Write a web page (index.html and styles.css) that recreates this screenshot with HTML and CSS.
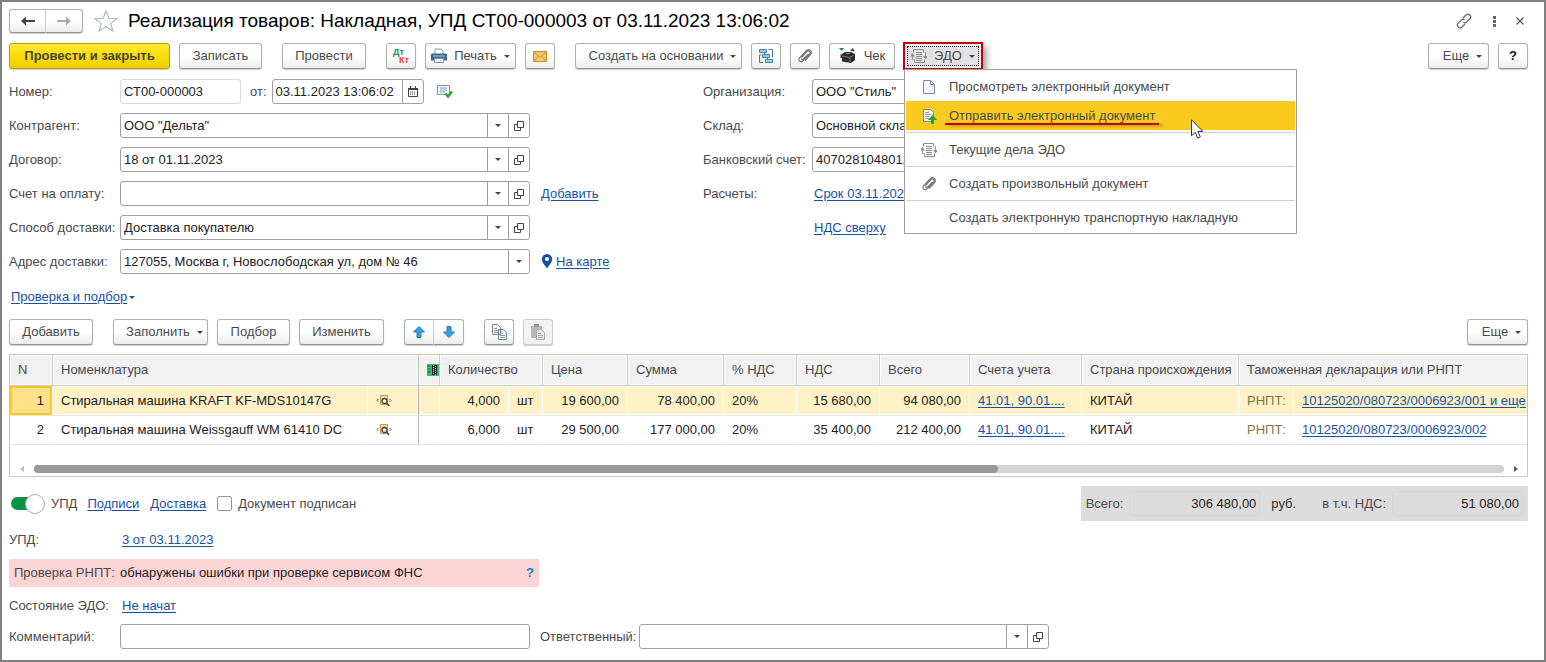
FILE: index.html
```html
<!DOCTYPE html>
<html lang="ru">
<head>
<meta charset="utf-8">
<title>Реализация товаров: Накладная, УПД СТ00-000003</title>
<link rel="stylesheet" href="styles.css">
</head>
<body>
<svg class="defs" aria-hidden="true">
  <symbol id="i-open" viewBox="0 0 10 10"><path d="M3.500.5h6v6h-6z M3.500 3.500h-3v6h6v-3" fill="none" stroke="#444"/></symbol>
  <symbol id="i-clip" viewBox="0 0 16 16"><path d="M4.500 9.500l5.500-5.800c1.800-1.700 4 .2 2.500 2.200l-6.500 7c-2.500 2.300-5.500-.6-3.200-3.200l6.500-7c2.700-2.700 6.700.6 4.200 3.800l-5.500 6M5 10.300c-.6 1.400.8 1.800 1.600.8l4.700-5" fill="none" stroke="#777" stroke-width="1.200"/></symbol>
  <symbol id="i-edo" viewBox="0 0 16 16"><path d="M2.500 4.500v-3h10v3M3.500 11.500v3h10v-3M5 4.500h6M5 6.500h6M5 8.500h6M5 10.500h6M5 12.500h6M13.500 4.500h1v4M2.500 11.500h-1v-4" fill="none" stroke="#8c8c8c"/><path d="M-1 8.500l2.500-3.500L4 8.500zM12 8l2.500 3.500L17 8z" fill="#8c8c8c"/></symbol>
  <symbol id="i-find" viewBox="0 0 16 14"><path d="M4.500 1.500h7v9h-7z" fill="#fbd79c" stroke="#c89b5a"/><circle cx="8.500" cy="7" r="2.500" fill="#fff3da" stroke="#444" stroke-width="1.300"/><path d="M10.500 9l2.500 3" stroke="#444" stroke-width="1.600"/><path d="M2.500 5L1 6.500 2.500 8M13.500 5L15 6.500 13.500 8" fill="none" stroke="#555"/></symbol>
</svg>
<main class="window">
  <header class="titlebar">
    <div class="pair nav">
      <button class="btn" aria-label="Назад"><svg width="14" height="10" viewBox="0 0 14 10"><path d="M0 5l5-4.500V4h9v2H5v3.500z" fill="#444"/></svg></button>
      <button class="btn" aria-label="Вперед"><svg width="14" height="10" viewBox="0 0 14 10"><path d="M14 5L9 .5V4H0v2h9v3.500z" fill="#aaa"/></svg></button>
    </div>
    <svg class="star" width="24" height="22" viewBox="0 0 24 22"><path d="M12 1l3 7.500 8 .2-6.400 4.900L19 21l-7-4.500L5 21l2.400-7.400L1 8.700l8-.2z" fill="none" stroke="#b3bac2" stroke-width="1.200"/></svg>
    <h1>Реализация товаров: Накладная, УПД СТ00-000003 от 03.11.2023 13:06:02</h1>
    <div class="window-tools">
      <button class="plain" aria-label="Ссылка"><svg width="16" height="16" viewBox="0 0 16 16" fill="none" stroke="#666" stroke-width="1.300"><path d="M7 5l3-3c2.500-2.300 6 1.200 4 3.600l-3.500 3.500c-1 .9-2.300.8-3.200.1M9 11l-3 3c-2.500 2.300-6-1.200-4-3.600l3.500-3.500c1-.9 2.300-.8 3.200-.1"/></svg></button>
      <button class="plain" aria-label="Меню"><svg width="3" height="11" fill="#666"><path d="M0 0h3v3H0zM0 4h3v3H0zM0 8h3v3H0z"/></svg></button>
      <button class="plain" aria-label="Закрыть"><svg width="8" height="8" stroke="#555" stroke-width="1.200"><path d="M.5.5l7 7M7.500.5l-7 7"/></svg></button>
    </div>
  </header>

  <div class="toolbar">
    <button class="btn primary">Провести и закрыть</button>
    <button class="btn w-save">Записать</button>
    <button class="btn w-post group">Провести</button>
    <button class="btn icon group" aria-label="Дт Кт"><span class="dtkt"><span class="dt">Дт</span><span class="kt">Кт</span></span></button>
    <button class="btn w-print"><svg width="16" height="16" viewBox="0 0 16 16"><path d="M4 1h6l2 2v4H4z" fill="#fff" stroke="#8296aa"/><path d="M1.500 5.500h13c.8 0 1.500.5 1.500 1.300V12.500H0V6.800c0-.8.7-1.300 1.500-1.300z" fill="#3a6a92"/><path d="M2 8h12" stroke="#a8c6de"/><path d="M3.500 10.500h9v4h-9z" fill="#eef3f7" stroke="#8296aa"/></svg>Печать<i class="caret"></i></button>
    <button class="btn icon" aria-label="Письмо"><svg width="14" height="11" viewBox="0 0 14 11"><path d="M.5.5h13v10H.5z" fill="#f8c968" stroke="#c98b2b"/><path d="M1 1l6 5.500L13 1M1 10l4.500-5M13 10L8.500 5" fill="none" stroke="#c98b2b"/></svg></button>
    <button class="btn w-create group">Создать на основании<i class="caret"></i></button>
    <button class="btn icon" aria-label="Структура"><svg width="16" height="16" viewBox="0 0 16 16"><path d="M1.500 1.500h7v3h-7zM4.500 6.500h7v3h-7zM7.500 11.500h7v3h-7z" fill="#a9cbe3" stroke="#3d7ba8"/><path d="M10.500 1.500h4v8M3.500 7H1.500v7.500H5M6.500 4.500v2M9.500 9.500v2" fill="none" stroke="#3d7ba8"/></svg></button>
    <button class="btn icon" aria-label="Файлы"><svg width="16" height="16"><use href="#i-clip"/></svg></button>
    <button class="btn w-check"><svg width="18" height="16" viewBox="0 0 18 16"><path d="M1.500 7l4.500-3h6l4 2v6l-4 3-9-1.500V10H1.500z" fill="#2b2b2b"/><path d="M3 8l8 1.500L15 7M11 10v4" stroke="#777" fill="none"/><path d="M7 5.500h4" stroke="#999"/><path d="M0 0h5L2.500 3z" fill="#159447"/><path d="M11 3l2.500-3L16 3z" fill="#2f45b5"/></svg>Чек</button>
    <div class="edo">
      <button class="btn edo-btn" aria-expanded="true"><svg class="wide" width="16" height="16"><use href="#i-edo"/></svg>ЭДО<i class="caret"></i></button>
      <div class="menu" role="menu">
        <div class="menu-group">
          <button role="menuitem"><svg width="16" height="16" viewBox="0 0 16 16"><path d="M2.500 1.500h7l4 4v9h-11z" fill="#f3f7fa" stroke="#7a8ea3"/><path d="M9.500 1.500v4h4" fill="none" stroke="#7a8ea3"/></svg>Просмотреть электронный документ</button>
          <button role="menuitem" class="active"><svg width="16" height="16" viewBox="0 0 16 16"><path d="M2.500 1.500h7l3 3v9h-10z" fill="#f3f7fa" stroke="#7a8ea3"/><path d="M4 4.500h4M4 6.500h6M4 8.500h5M4 10.500h4" stroke="#8fa3b5"/><path d="M11.500 7l4.500 5h-3v4h-3v-4H7z" fill="#14a52c"/></svg><span class="marked">Отправить электронный документ</span></button>
        </div>
        <div class="menu-group"><button role="menuitem"><svg class="wide" width="16" height="16"><use href="#i-edo"/></svg>Текущие дела ЭДО</button></div>
        <div class="menu-group"><button role="menuitem"><svg width="16" height="16"><use href="#i-clip"/></svg>Создать произвольный документ</button></div>
        <div class="menu-group"><button role="menuitem"><svg width="16" height="16"></svg>Создать электронную транспортную накладную</button></div>
        <svg class="cursor" width="13" height="20" viewBox="0 0 13 20"><path d="M.5.8v16l3.700-3.400 2.500 5.600 2.600-1.200-2.500-5.400h5z" fill="#fff" stroke="#26304a"/></svg>
      </div>
    </div>
    <button class="btn w-more push">Еще<i class="caret"></i></button>
    <button class="btn icon help">?</button>
  </div>

  <form class="form">
    <div class="fields">
      <label for="num">Номер:</label>
      <div class="row"><input id="num" class="box number" value="СТ00-000003"><label for="date" class="from">от:</label>
        <div class="combo date"><input id="date" value="03.11.2023 13:06:02"><button type="button" aria-label="Календарь"><svg width="10" height="11" viewBox="0 0 10 11"><path d="M.5 2.500h9v8h-9z" fill="none" stroke="#444"/><path d="M0 2h10v2H0zM2 0h1v2H2zM7 0h1v2H7z" fill="#444"/><path d="M2 6h6M2 8h6" stroke="#444" stroke-dasharray="1 1"/></svg></button></div>
        <svg class="posted" width="16" height="15" viewBox="0 0 16 15"><path d="M.5 1.500h12v9H.5z" fill="#f3f7fa" stroke="#8195a9"/><path d="M3 4h7M3 6h7M3 8h5" stroke="#8da0b2"/><path d="M8.500 9.500l2.500 3L15 7.500" fill="none" stroke="#1fae35" stroke-width="2.500"/></svg>
      </div>
      <label for="agent">Контрагент:</label>
      <div class="row"><div class="combo"><input id="agent" value="ООО &quot;Дельта&quot;"><button type="button" aria-label="Выбрать"><i class="caret"></i></button><button type="button" aria-label="Открыть"><svg width="10" height="10"><use href="#i-open"/></svg></button></div></div>
      <label for="contract">Договор:</label>
      <div class="row"><div class="combo"><input id="contract" value="18 от 01.11.2023"><button type="button" aria-label="Выбрать"><i class="caret"></i></button><button type="button" aria-label="Открыть"><svg width="10" height="10"><use href="#i-open"/></svg></button></div></div>
      <label for="bill">Счет на оплату:</label>
      <div class="row"><div class="combo"><input id="bill"><button type="button" aria-label="Выбрать"><i class="caret"></i></button><button type="button" aria-label="Открыть"><svg width="10" height="10"><use href="#i-open"/></svg></button></div><a href="#" class="side">Добавить</a></div>
      <label for="way">Способ доставки:</label>
      <div class="row"><div class="combo"><input id="way" value="Доставка покупателю"><button type="button" aria-label="Выбрать"><i class="caret"></i></button><button type="button" aria-label="Открыть"><svg width="10" height="10"><use href="#i-open"/></svg></button></div></div>
      <label for="addr">Адрес доставки:</label>
      <div class="row"><div class="combo"><input id="addr" value="127055, Москва г, Новослободская ул, дом № 46"><button type="button" aria-label="Выбрать"><i class="caret"></i></button></div><span class="side map"><svg width="12" height="15" viewBox="0 0 12 15"><path d="M6 0a5.200 5.200 0 0 1 5.200 5.200C11.200 8.500 8 11 6 14.500 4 11 .8 8.500.8 5.200A5.200 5.200 0 0 1 6 0z" fill="#1751a6"/><circle cx="6" cy="5" r="2" fill="#fff"/></svg><a href="#">На карте</a></span></div>
    </div>
    <div class="fields second">
      <label for="org">Организация:</label>
      <div class="row"><input id="org" class="box" value="ООО &quot;Стиль&quot;"></div>
      <label for="store">Склад:</label>
      <div class="row"><input id="store" class="box" value="Основной склад"></div>
      <label for="bank">Банковский счет:</label>
      <div class="row"><input id="bank" class="box" value="40702810480120"></div>
      <span>Расчеты:</span>
      <div class="row"><a href="#" class="inset">Срок 03.11.2023</a></div>
      <span></span>
      <div class="row"><a href="#" class="inset">НДС сверху</a></div>
    </div>
  </form>

  <div class="check-row"><a href="#">Проверка и подбор</a><i class="caret blue"></i></div>

  <div class="toolbar list-tools">
    <button class="btn w-add">Добавить</button>
    <button class="btn w-fill group">Заполнить<i class="caret"></i></button>
    <button class="btn w-pick">Подбор</button>
    <button class="btn w-edit">Изменить</button>
    <div class="pair arrows group">
      <button class="btn" aria-label="Вверх"><svg width="12" height="12" viewBox="0 0 12 12"><path d="M6 .5L11.500 6H8v5.500H4V6H.5z" fill="#39a0e0" stroke="#2478ae"/></svg></button>
      <button class="btn" aria-label="Вниз"><svg width="12" height="12" viewBox="0 0 12 12"><path d="M6 11.500L.5 6H4V.5h4V6h3.500z" fill="#39a0e0" stroke="#2478ae"/></svg></button>
    </div>
    <button class="btn icon group" aria-label="Копировать"><svg width="15" height="16" viewBox="0 0 15 16"><path d="M.5.5h5l3 3v7h-8zM6.500 5.500h5l3 3v7h-8z" fill="#f7f9fb" stroke="#71879d"/><path d="M2 4.500h3M2 6.500h4M2 8.500h4M8 9.500h3M8 11.500h5M8 13.500h5" stroke="#8599ad"/></svg></button>
    <button class="btn icon off" aria-label="Вставить"><svg width="15" height="16" viewBox="0 0 15 16"><path d="M0 2h11v12H0z" fill="#b8b8b8"/><path d="M3 0h5v3H3z" fill="#999"/><path d="M5.500 5.500h5l3 3v7h-8z" fill="#e4e7ea" stroke="#a4b0bb"/><path d="M7 9.500h3M7 11.500h5M7 13.500h5" stroke="#a4b0bb"/></svg></button>
    <button class="btn w-more push">Еще<i class="caret"></i></button>
  </div>

  <section class="grid">
    <table>
      <colgroup><col class="c43"><col class="c315"><col class="c51"><col class="c21"><col class="c69"><col class="c34"><col class="c85"><col class="c96"><col class="c73"><col class="c83"><col class="c90"><col class="c112"><col class="c157"><col class="c55"><col></colgroup>
      <thead><tr><th>N</th><th colspan="2" class="fixed">Номенклатура</th><th class="mark"><svg width="12" height="12" viewBox="0 0 12 12"><path d="M0 0h12v12H0z" fill="#35b76d"/><path d="M5 1h5v10H5z" fill="#222"/><path d="M6.500 1v10M8.500 2v9" stroke="#fff" stroke-dasharray="1 1"/><path d="M1 2h2M1 5h2M1 8h2" stroke="#0b7a3c"/></svg></th><th colspan="2">Количество</th><th>Цена</th><th>Сумма</th><th>% НДС</th><th>НДС</th><th>Всего</th><th>Счета учета</th><th>Страна происхождения</th><th colspan="2">Таможенная декларация или РНПТ</th></tr></thead>
      <tbody>
        <tr class="selected"><td class="num current">1</td><td>Стиральная машина KRAFT KF-MDS10147G</td><td class="fixed"><svg width="16" height="14"><use href="#i-find"/></svg></td><td></td><td class="num">4,000</td><td>шт</td><td class="num">19 600,00</td><td class="num">78 400,00</td><td>20%</td><td class="num">15 680,00</td><td class="num">94 080,00</td><td><a href="#">41.01, 90.01....</a></td><td>КИТАЙ</td><td class="muted">РНПТ:</td><td><a href="#">10125020/080723/0006923/001 и еще</a></td></tr>
        <tr><td class="num">2</td><td>Стиральная машина Weissgauff WM 61410 DC</td><td class="fixed"><svg width="16" height="14"><use href="#i-find"/></svg></td><td></td><td class="num">6,000</td><td>шт</td><td class="num">29 500,00</td><td class="num">177 000,00</td><td>20%</td><td class="num">35 400,00</td><td class="num">212 400,00</td><td><a href="#">41.01, 90.01....</a></td><td>КИТАЙ</td><td class="muted">РНПТ:</td><td><a href="#">10125020/080723/0006923/002</a></td></tr>
      </tbody>
    </table>
    <div class="scroll"><svg width="4" height="6"><path d="M4 0v6L0 3z" fill="#bbb"/></svg><div class="track"><div class="thumb"></div></div><svg width="4" height="6"><path d="M0 0v6l4-3z" fill="#555"/></svg></div>
  </section>

  <div class="summary">
    <div class="options">
      <label class="switch"><input type="checkbox" checked><span>УПД</span></label>
      <a href="#">Подписи</a><a href="#" class="delivery">Доставка</a>
      <label class="tick"><input type="checkbox">Документ подписан</label>
    </div>
    <div class="totals"><label for="total">Всего:</label><input id="total" value="306 480,00" readonly><span class="rub">руб.</span><label for="vat">в т.ч. НДС:</label><input id="vat" value="51 080,00" readonly></div>
  </div>

  <div class="foot">
    <span>УПД:</span><div class="row"><a href="#" class="inset">3 от 03.11.2023</a></div>
  </div>
  <div class="alert"><span>Проверка РНПТ:</span><strong>обнаружены ошибки при проверке сервисом ФНС</strong><a href="#" aria-label="Справка">?</a></div>
  <div class="foot">
    <span>Состояние ЭДО:</span><div class="row"><a href="#" class="inset">Не начат</a></div>
  </div>
  <div class="foot comment">
    <label for="comment">Комментарий:</label>
    <div class="row"><input id="comment" class="box"><label for="resp" class="resp">Ответственный:</label><div class="combo"><input id="resp"><button type="button" aria-label="Выбрать"><i class="caret"></i></button><button type="button" aria-label="Открыть"><svg width="10" height="10"><use href="#i-open"/></svg></button></div></div>
  </div>
</main>
</body>
</html>
```
FILE: styles.css
```css
* { box-sizing: border-box; }
body { margin: 0; font: 13px/16px "Liberation Sans", Arial, sans-serif; color: #4a4a4a; background: #fff; }
.defs { position: absolute; width: 0; height: 0; }
.window { min-height: 100vh; padding: 7px 16px 10px 7px; border: 2px solid #808080; }
button, input { font: inherit; color: inherit; }
button { padding: 0; cursor: pointer; }
svg { flex: none; }
a { color: #1751a6; text-decoration: underline; text-underline-offset: 2px; }
.caret { width: 0; height: 0; border: solid transparent; border-width: 3px 3px 0; border-top-color: #444; flex: none; }
.caret.blue { border-top-color: #1751a6; margin-left: 2px; }
.wide { overflow: visible; }

.btn { display: flex; align-items: center; justify-content: center; gap: 7px; height: 26px; border: 1px solid #b0b0b0; border-bottom-color: #929292; border-radius: 3px; background: linear-gradient(#fff 50%, #ececec); box-shadow: 0 1px 1px #ccc; white-space: nowrap; }
.pair { display: flex; }
.pair .btn:first-child { border-radius: 3px 0 0 3px; border-right-color: #ccc; }
.pair .btn:last-child { border-radius: 0 3px 3px 0; border-left: 0; }

.titlebar { display: flex; align-items: center; height: 24px; }
.nav .btn { width: 37px; height: 24px; }
.star { margin-left: 11px; }
h1 { margin: 0 0 0 10px; font-size: 19px; line-height: 24px; font-weight: 400; color: #000; }
.window-tools { display: flex; align-items: center; gap: 20px; margin-left: auto; padding-right: 4px; }
.plain { display: flex; border: 0; background: none; }
.plain:first-child { margin-right: 1px; }

.toolbar { display: flex; gap: 9px; margin-top: 10px; }
.group { margin-left: 11px; }
.push { margin-left: auto; }
.primary { width: 161px; border-color: #b79c00; background: linear-gradient(#ffe838, #fddc00 50%, #efcf00); color: #444; font-weight: 700; }
.w-save { width: 83px; }
.w-post { width: 84px; }
.w-print { width: 91px; }
.w-create { width: 167px; padding-left: 8px; }
.w-check { width: 66px; }
.w-more { width: 61px; padding-left: 8px; }
.w-add { width: 84px; }
.w-fill { width: 95px; padding-left: 8px; }
.w-pick { width: 73px; }
.w-edit { width: 85px; }
.icon { width: 30px; }
.help { color: #111; font-weight: 700; }
.off { border-color: #ccc; background: #f2f2f2; }
.arrows .btn { width: 30px; }
.dtkt { display: flex; flex-direction: column; width: 16px; font-size: 9px; line-height: 8px; font-weight: 700; }
.dt { color: #079447; text-align: left; }
.kt { color: #e34040; text-align: right; }

.edo { position: relative; margin-left: 1px; }
.edo-btn { width: 76px; height: 24px; margin-top: 1px; border: 2px solid #f2f2f2; border-radius: 0; background: #e2e2e2; outline: 2px solid #c00010; box-shadow: 5px 3px 6px 1px #aaa; }
.edo-btn::before { content: ""; position: absolute; inset: 3px 2px; border: 1px dotted #111; }
.menu { position: absolute; z-index: 2; top: 26px; left: -1px; width: 393px; padding: 0 1px; border: 1px solid #a0a0a0; background: #fff; }
.menu-group { padding: 2px 0; }
.menu-group:last-of-type { padding-bottom: 1px; }
.menu-group + .menu-group { border-top: 1px solid #d6d2bf; }
.menu button { display: flex; align-items: center; gap: 12px; width: 100%; height: 29px; padding-left: 15px; border: 0; background: none; white-space: nowrap; }
.menu .active { background: #facb1f; }
.marked { position: relative; }
.marked::after { content: ""; position: absolute; left: -4px; right: -4px; bottom: -1px; height: 2px; background: #c00010; box-shadow: 4px 1px 3px #a88a20; }
.cursor { position: absolute; left: 286px; top: 49px; }

.form { display: grid; grid-template-columns: 694fr 825fr; margin-top: 10px; }
.fields { display: grid; grid-template-columns: 111px 1fr; grid-auto-rows: 25px; row-gap: 9px; align-items: center; white-space: nowrap; }
.fields.second { grid-template-columns: 109px 1fr; }
.row { display: flex; align-items: center; }
.box, .combo { width: 410px; height: 25px; border: 1px solid #a0a0a0; border-radius: 3px; background: #fff; color: #222; }
.box { padding: 0 3px; }
.number { width: 121px; border-color: #d8d8d8; }
.from { margin: 0 5px 0 9px; }
.combo { display: flex; }
.combo.date { width: 152px; }
.posted { margin-left: 13px; }
.combo input { flex: 1; min-width: 0; padding: 0 3px; border: 0; background: none; }
.combo button { display: flex; align-items: center; justify-content: center; width: 21px; border: 0; border-left: 1px solid #a0a0a0; background: none; }
.side { margin-left: 11px; }
.map { display: flex; align-items: center; gap: 3px; }
.inset { margin-left: 2px; }

.check-row { display: flex; align-items: center; margin: 15px 0 0 2px; }
.list-tools { margin-top: 14px; }

.grid { margin-top: 9px; border: 1px solid #cbc7ad; overflow: hidden; }
table { width: 100%; table-layout: fixed; border-collapse: separate; border-spacing: 0; }
.c43 { width: 43px; } .c315 { width: 315px; } .c51 { width: 51px; } .c21 { width: 21px; } .c69 { width: 69px; }
.c34 { width: 34px; } .c85 { width: 85px; } .c96 { width: 96px; } .c73 { width: 73px; } .c83 { width: 83px; }
.c90 { width: 90px; } .c112 { width: 112px; } .c157 { width: 157px; } .c55 { width: 55px; }
th, td { padding: 0 0 0 8px; white-space: nowrap; overflow: hidden; text-align: left; font-weight: 400; }
th { height: 31px; border-right: 1px solid #c8c8c8; border-bottom: 1px solid #c8c8c8; background: #f1f1f1; box-shadow: inset 0 0 0 1px #fff; }
td { height: 29px; border-right: 1px solid #fff; border-bottom: 1px solid #e4e4e4; color: #222; }
th:last-child, td:last-child { border-right: 0; }
tbody tr:first-child td { height: 30px; }
.selected td { background: #fef1c6; box-shadow: inset 0 1px #fff, inset 0 -1px #fff; }
.selected .current { background: #ffe28a; box-shadow: inset 0 0 0 2px #fac81e; }
td.fixed, th.fixed { border-right-color: #b8b8b8; }
.mark svg, td svg { display: block; }
td.num { padding: 0 8px; text-align: right; }
td.muted { color: #7d764d; }
.scroll { display: flex; align-items: center; gap: 10px; height: 31px; padding: 16px 9px 0 10px; }
.track { flex: 1; height: 8px; border-radius: 4px; background: #d4d4d4; }
.thumb { width: 65.6%; height: 8px; border-radius: 4px; background: #999; }

.summary { display: flex; justify-content: space-between; margin-top: 9px; }
.options { display: flex; align-items: center; padding-left: 2px; }
.switch { display: flex; align-items: center; gap: 6px; margin-right: 10px; }
.switch input { appearance: none; display: flex; align-items: center; justify-content: flex-end; width: 34px; height: 13px; margin: 0; border-radius: 7px; background: linear-gradient(90deg, #079447 70%, transparent 70%); }
.switch input::after { content: ""; width: 18px; height: 18px; flex: none; border: 1px solid #aaa; border-radius: 50%; background: #fff; }
.delivery { margin: 0 11px; }
.tick { display: flex; align-items: center; gap: 6px; }
.tick input { appearance: none; width: 15px; height: 15px; margin: 0; border: 1px solid #999; border-radius: 2px; }
.totals { display: flex; align-items: center; height: 35px; padding: 0 5px; background: #dcdcdc; }
.totals input { width: 131px; height: 25px; padding: 0 3px; border: 1px solid #d6d6d6; border-radius: 3px; background: none; color: #222; text-align: right; }
.totals label { margin-right: 6px; }
.rub { margin: 0 26px 0 11px; color: #333; }

.foot { display: grid; grid-template-columns: 111px 1fr; align-items: center; margin-top: 11px; white-space: nowrap; }
.comment { margin-top: 10px; }
.alert { display: flex; align-items: center; width: 530px; height: 28px; margin-top: 11px; padding: 0 5px; background: #fbd5d5; }
.alert span { width: 106px; }
.alert strong { font-weight: 400; color: #222; }
.alert a { margin-left: auto; color: #1f78c8; font-weight: 700; text-decoration: none; }
.resp { width: 99px; margin-left: 10px; }
```
